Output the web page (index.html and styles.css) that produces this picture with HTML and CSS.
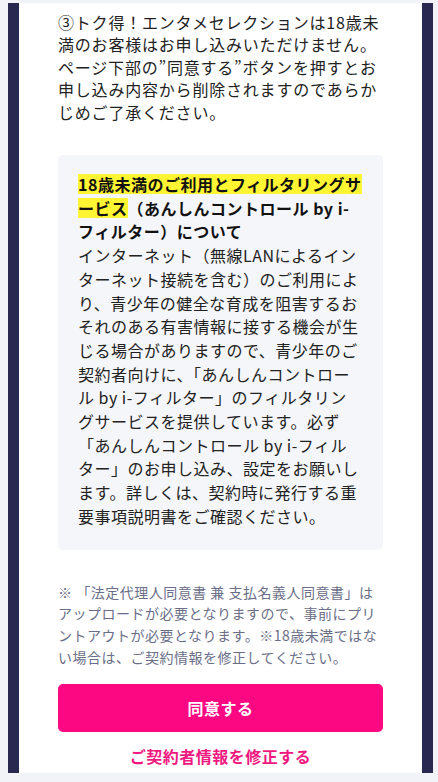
FILE: index.html
```html
<!DOCTYPE html>
<html lang="ja">
<head>
<meta charset="utf-8">
<title>同意</title>
<link rel="stylesheet" href="styles.css">
</head>
<body>
<div class="frame">
  <p class="lead">③トク得！エンタメセレクションは18歳未満のお客様はお申し込みいただけません。ページ下部の”同意する”ボタンを押すとお申し込み内容から削除されますのであらかじめご了承ください。</p>
  <div class="notice">
    <p class="notice-title"><span class="mark">18歳未満のご利用とフィルタリングサービス</span>（あんしんコントロール by i-フィルター）について</p>
    <p class="notice-body">インターネット（無線LANによるインターネット接続を含む）のご利用により、青少年の健全な育成を阻害するおそれのある有害情報に接する機会が生じる場合がありますので、青少年のご契約者向けに、「あんしんコントロール by i-フィルター」のフィルタリングサービスを提供しています。必ず「あんしんコントロール by i-フィルター」のお申し込み、設定をお願いします。詳しくは、契約時に発行する重要事項説明書をご確認ください。</p>
  </div>
  <p class="note">※ 「法定代理人同意書 兼 支払名義人同意書」はアップロードが必要となりますので、事前にプリントアウトが必要となります。※18歳未満ではない場合は、ご契約情報を修正してください。</p>
  <button class="agree" type="button">同意する</button>
  <a class="edit" href="#">ご契約者情報を修正する</a>
</div>
</body>
</html>
```

FILE: styles.css
```css
html, body {
  margin: 0;
  padding: 0;
}
body {
  background: #f1f3f8;
  font-family: "Noto Sans CJK JP", "Noto Sans", sans-serif;
  color: #222;
}
.frame {
  box-sizing: border-box;
  width: 425px;
  height: 770px;
  margin: 3px 0 0 8px;
  background: #fff;
  border-left: 11px solid #292850;
  border-right: 11px solid #292850;
  padding: 8px 39px 0 39px;
  overflow: hidden;
  display: flex;
  flex-direction: column;
}
p {
  margin: 0;
}
.lead {
  font-size: 16px;
  line-height: 22.4px;
  letter-spacing: 0.8px;
  color: #222;
}
.notice {
  margin-top: 32px;
  background: #f5f6f9;
  border-radius: 5px;
  padding: 18px 20px 21px 20px;
  font-size: 16px;
  line-height: 23.7px;
  letter-spacing: 0.5px;
}
.notice-title {
  font-weight: 700;
  color: #111;
}
.mark {
  background: linear-gradient(to bottom, transparent 0, transparent 2px, #fff533 2px, #fff533 calc(100% - 2px), transparent calc(100% - 2px));
}
.notice-body {
  color: #222;
}
.note {
  margin-top: 32px;
  font-size: 14px;
  line-height: 21.7px;
  letter-spacing: 0.5px;
  color: #6a6e88;
}
.agree {
  margin-top: 16px;
  height: 48px;
  width: 100%;
  border: none;
  border-radius: 5px;
  background: #fd0883;
  color: #fff;
  font-family: inherit;
  font-size: 16px;
  font-weight: 700;
  letter-spacing: 0.5px;
  flex-shrink: 0;
}
.edit {
  margin-top: 12px;
  display: block;
  text-align: center;
  font-size: 16px;
  line-height: 24px;
  font-weight: 700;
  letter-spacing: 0.5px;
  color: #f0197f;
  text-decoration: none;
}
```
